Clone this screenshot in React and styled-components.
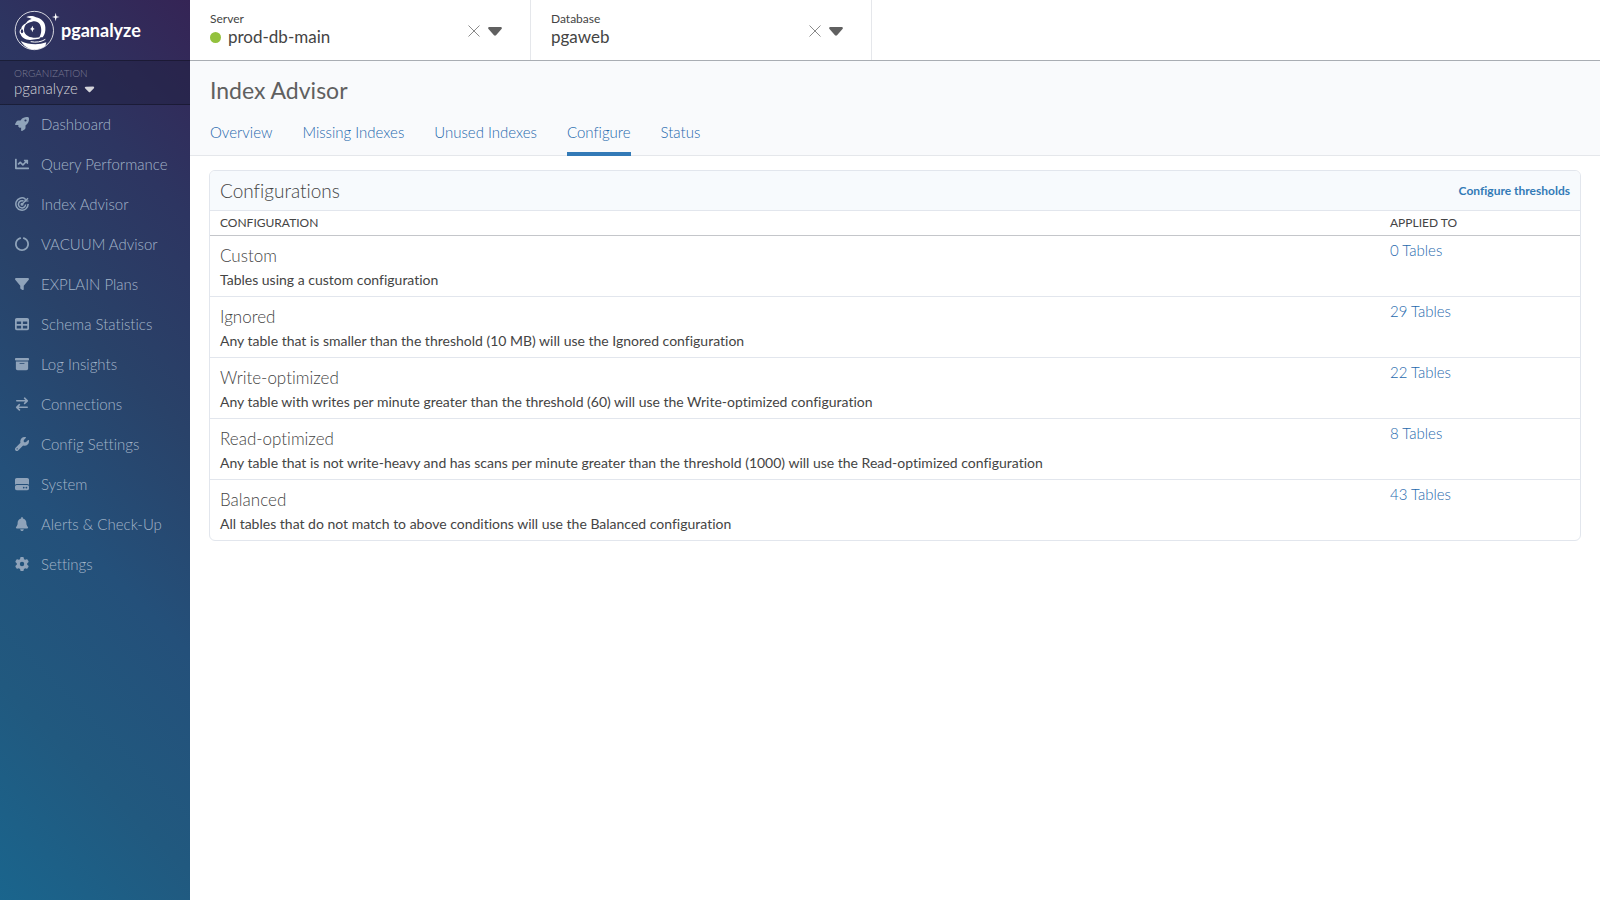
import React, { useState } from "react";
import styled, { createGlobalStyle } from "styled-components";
import { FaChartLine } from "react-icons/fa";
import {
  FaRocket,
  FaCircleNotch,
  FaFilter,
  FaTable,
  FaBoxArchive,
  FaWrench,
  FaHardDrive,
  FaBell,
  FaGear,
  FaCaretDown,
} from "react-icons/fa6";

const AdvisorIcon = () => (
  <svg viewBox="0 0 28 28" fill="none" stroke="currentColor" strokeWidth="3">
    <path d="M20.5 3.6A12.3 12.3 0 1 0 26.3 14" />
    <path d="M17 8A7.2 7.2 0 1 0 21.2 15" />
    <path d="M14 14.5L26 2.5" />
    <path d="M20.5 3V8H27" strokeWidth="2.4" />
    <circle cx="14" cy="14.5" r="1.6" />
  </svg>
);

const ConnectionsIcon = () => (
  <svg viewBox="0 0 14 14" fill="none" stroke="currentColor" strokeWidth="1.6" strokeLinecap="round" strokeLinejoin="round">
    <path d="M1.8 3.8H12.2M9.6 1.2L12.3 3.8L9.6 6.4" />
    <path d="M12.2 10.3H1.8M4.4 7.7L1.7 10.3L4.4 12.9" />
  </svg>
);

const Logo = () => (
  <svg viewBox="0 0 138 123" width="46" height="41" aria-hidden="true">
    <circle cx="61" cy="61.5" r="57.5" fill="none" stroke="#fff" strokeWidth="2.4" />
    <path
      fill="#fff"
      d="M37 21C46 16 58 17 66 22C82 25 93 36 94 52C95 64 92 75 86 82L76 82C83 70 84 54 77 42C71 34 62 32 54 35C46 37 38 40 33 45C36 36 45 29 53 27C47 24 42 23 37 21Z"
    />
    <path
      fill="#fff"
      d="M40 38C31 41 23 46 22 56C16 58 15 68 20 73C23 83 34 90 48 90L76 86L80 81C68 85 52 84 43 79C34 74 30 68 30 60C30 51 34 44 40 38Z"
    />
    <ellipse cx="24" cy="64" rx="3.5" ry="6" fill="#2e3160" />
    <path fill="#fff" d="M55 47L57.5 54L62 57L57.5 59L55 67L52.5 59L48 57L52.5 54Z" />
    <path fill="none" stroke="#fff" strokeWidth="3" d="M50 95C66 98 82 96 94 88" />
    <path fill="#fff" d="M20 93C44 104 72 106 97 97L94 108C82 117 60 121 46 116C35 111 25 103 20 93Z" />
    <path fill="#fff" d="M125 8L127.5 18.5L137 21L127.5 23.5L125 34L122.5 23.5L114 21L122.5 18.5Z" />
  </svg>
);

const navItems = [
  { label: "Dashboard", icon: <FaRocket /> },
  { label: "Query Performance", icon: <FaChartLine /> },
  { label: "Index Advisor", icon: <AdvisorIcon /> },
  { label: "VACUUM Advisor", icon: <FaCircleNotch /> },
  { label: "EXPLAIN Plans", icon: <FaFilter /> },
  { label: "Schema Statistics", icon: <FaTable /> },
  { label: "Log Insights", icon: <FaBoxArchive /> },
  { label: "Connections", icon: <ConnectionsIcon /> },
  { label: "Config Settings", icon: <FaWrench /> },
  { label: "System", icon: <FaHardDrive /> },
  { label: "Alerts & Check-Up", icon: <FaBell /> },
  { label: "Settings", icon: <FaGear /> },
];

const tabs = ["Overview", "Missing Indexes", "Unused Indexes", "Configure", "Status"];

const configurations = [
  {
    name: "Custom",
    description: "Tables using a custom configuration",
    tables: 0,
  },
  {
    name: "Ignored",
    description: "Any table that is smaller than the threshold (10 MB) will use the Ignored configuration",
    tables: 29,
  },
  {
    name: "Write-optimized",
    description:
      "Any table with writes per minute greater than the threshold (60) will use the Write-optimized configuration",
    tables: 22,
  },
  {
    name: "Read-optimized",
    description:
      "Any table that is not write-heavy and has scans per minute greater than the threshold (1000) will use the Read-optimized configuration",
    tables: 8,
  },
  {
    name: "Balanced",
    description: "All tables that do not match to above conditions will use the Balanced configuration",
    tables: 43,
  },
];

const Picker = ({ id, label, value, online }) => {
  const [selected, setSelected] = useState(value);

  return (
    <PickerBox>
      <PickerField>
        <label htmlFor={id}>{label}</label>
        <PickerValue>
          {online && selected ? <StatusDot /> : null}
          <select id={id} value={selected} onChange={(e) => setSelected(e.target.value)}>
            <option value=""></option>
            <option value={value}>{value}</option>
          </select>
        </PickerValue>
      </PickerField>
      <ClearButton type="button" aria-label={`Clear ${label}`} onClick={() => setSelected("")}>
        <svg viewBox="0 0 12 12" width="12" height="12" stroke="currentColor" strokeWidth="1">
          <path d="M0.5 0.5L11.5 11.5M11.5 0.5L0.5 11.5" />
        </svg>
      </ClearButton>
      <svg viewBox="0 0 14 9" width="14" height="9" fill="#606060" aria-hidden="true">
        <path d="M1 0H13Q14.5 0.5 13.5 2L8 8.3Q7 9 6 8.3L0.5 2Q-0.5 0.5 1 0Z" />
      </svg>
    </PickerBox>
  );
};

const App = () => {
  const [activeTab, setActiveTab] = useState("Configure");

  return (
    <Page>
      <GlobalStyle />
      <Sidebar>
        <Brand href="#">
          <Logo />
          <span>pganalyze</span>
        </Brand>
        <Organization>
          <p>ORGANIZATION</p>
          <button type="button" aria-haspopup="menu">
            pganalyze <FaCaretDown />
          </button>
        </Organization>
        <Nav>
          {navItems.map((item) => (
            <NavLink href="#" key={item.label}>
              {item.icon}
              {item.label}
            </NavLink>
          ))}
        </Nav>
      </Sidebar>
      <Content>
        <TopBar>
          <Picker id="server" label="Server" value="prod-db-main" online />
          <Picker id="database" label="Database" value="pgaweb" />
        </TopBar>
        <PageHeader>
          <h1>Index Advisor</h1>
          <Tabs>
            {tabs.map((tab) => (
              <Tab href="#" key={tab} $active={tab === activeTab} onClick={() => setActiveTab(tab)}>
                {tab}
              </Tab>
            ))}
          </Tabs>
        </PageHeader>
        <Panel>
          <PanelHeader>
            <h2>Configurations</h2>
            <a href="#">Configure thresholds</a>
          </PanelHeader>
          <Table>
            <thead>
              <tr>
                <th>CONFIGURATION</th>
                <th className="applied">APPLIED TO</th>
              </tr>
            </thead>
            <tbody>
              {configurations.map((item) => (
                <tr key={item.name}>
                  <td>
                    <h3>{item.name}</h3>
                    <p>{item.description}</p>
                  </td>
                  <td>
                    <a href="#">{item.tables} Tables</a>
                  </td>
                </tr>
              ))}
            </tbody>
          </Table>
        </Panel>
      </Content>
    </Page>
  );
};

export default App;

const GlobalStyle = createGlobalStyle`
  * {
    box-sizing: border-box;
  }
  body {
    margin: 0;
    background: #ffffff;
    color: #444444;
    font-family: "Lato", "Open Sans", sans-serif;
    font-size: 15px;
    font-weight: 300;
    font-variant-ligatures: none;
    line-height: 20px;
  }
  h1, h2, h3, p {
    margin: 0;
  }
  a {
    color: #1f69ad;
    text-decoration: none;
  }
  button, select {
    padding: 0;
    border: none;
    background: none;
    font-family: inherit;
    font-weight: inherit;
    appearance: none;
    cursor: pointer;
  }
`;

const Page = styled.div`
  display: flex;
  min-height: 100vh;
`;

const Sidebar = styled.aside`
  width: 190px;
  flex-shrink: 0;
  background: linear-gradient(45deg, #1a658d 0%, #21597f 20%, #24507a 40%, #294269 60%, #2d3561 80%, #352455 100%);
`;

const Brand = styled.a`
  display: flex;
  align-items: center;
  gap: 1px;
  height: 60px;
  padding-left: 14px;
  color: #ffffff;
  font-size: 18px;
  font-weight: 700;
`;

const Organization = styled.div`
  height: 45px;
  padding: 5px 14px;
  background: rgba(32, 32, 64, 0.5);
  border-top: 1px solid rgba(0, 0, 0, 0.3);
  border-bottom: 1px solid rgba(0, 0, 0, 0.3);
  p {
    color: #7c7c94;
    font-size: 10px;
    line-height: 14px;
  }
  button {
    display: flex;
    align-items: center;
    gap: 4px;
    color: #d4d4da;
    font-size: 15px;
    line-height: 16px;
  }
`;

const Nav = styled.nav`
  display: flex;
  flex-direction: column;
`;

const NavLink = styled.a`
  display: flex;
  align-items: center;
  gap: 12px;
  height: 40px;
  padding: 0 0 2px 15px;
  color: #a3b5c9;
  svg {
    width: 14px;
    height: 14px;
    color: #8fa3ba;
  }
`;

const Content = styled.main`
  flex: 1;
  min-width: 0;
`;

const TopBar = styled.header`
  display: flex;
  height: 61px;
  border-bottom: 1px solid #a9adb3;
`;

const PickerBox = styled.div`
  display: flex;
  align-items: center;
  gap: 8px;
  width: 341px;
  padding: 2px 28px 0 20px;
  border-right: 1px solid #e5e7eb;
`;

const PickerField = styled.div`
  display: flex;
  flex: 1;
  flex-direction: column;
  padding-bottom: 4px;
  font-weight: 400;
  label {
    font-size: 12px;
    line-height: 16px;
  }
`;

const PickerValue = styled.div`
  display: flex;
  align-items: center;
  gap: 7px;
  select {
    flex: 1;
    color: #444444;
    font-size: 17px;
    line-height: 20px;
  }
`;

const StatusDot = styled.span`
  width: 11px;
  height: 11px;
  border-radius: 50%;
  background: #93c13d;
`;

const ClearButton = styled.button`
  display: flex;
  color: #8a8a8a;
`;

const PageHeader = styled.section`
  padding: 15px 20px 0;
  background: #f9fafc;
  border-bottom: 1px solid #e5e7eb;
  h1 {
    color: #606060;
    font-size: 23px;
    font-weight: 400;
    line-height: 28px;
  }
`;

const Tabs = styled.nav`
  display: flex;
  gap: 30px;
  margin-bottom: -1px;
`;

const Tab = styled.a`
  height: 52px;
  padding-top: 18px;
  border-bottom: 4px solid ${({ $active }) => ($active ? "#337ab7" : "transparent")};
`;

const Panel = styled.section`
  margin: 14px 19px;
  border: 1px solid #e2e6ed;
  border-radius: 6px;
  overflow: hidden;
`;

const PanelHeader = styled.div`
  display: flex;
  align-items: center;
  justify-content: space-between;
  height: 40px;
  padding: 0 10px;
  background: #f7fafd;
  border-bottom: 1px solid #e2e6ed;
  h2 {
    font-size: 19px;
    font-weight: 300;
  }
  a {
    color: #337ab7;
    font-size: 12px;
    font-weight: 700;
  }
`;

const Table = styled.table`
  width: 100%;
  border-collapse: collapse;
  th {
    height: 24px;
    padding: 0 10px;
    border-bottom: 1px solid #c4c6ca;
    font-size: 12px;
    font-weight: 400;
    text-align: left;
  }
  .applied {
    width: 200px;
  }
  td {
    height: 61px;
    padding: 4px 10px;
    vertical-align: top;
  }
  tr:not(:last-child) td {
    border-bottom: 1px solid #e2e6ed;
  }
  h3 {
    padding-top: 6px;
    font-size: 17px;
    font-weight: 300;
    line-height: 20px;
  }
  p {
    padding-top: 4px;
    font-size: 14px;
    font-weight: 400;
    line-height: 20px;
  }
`;
